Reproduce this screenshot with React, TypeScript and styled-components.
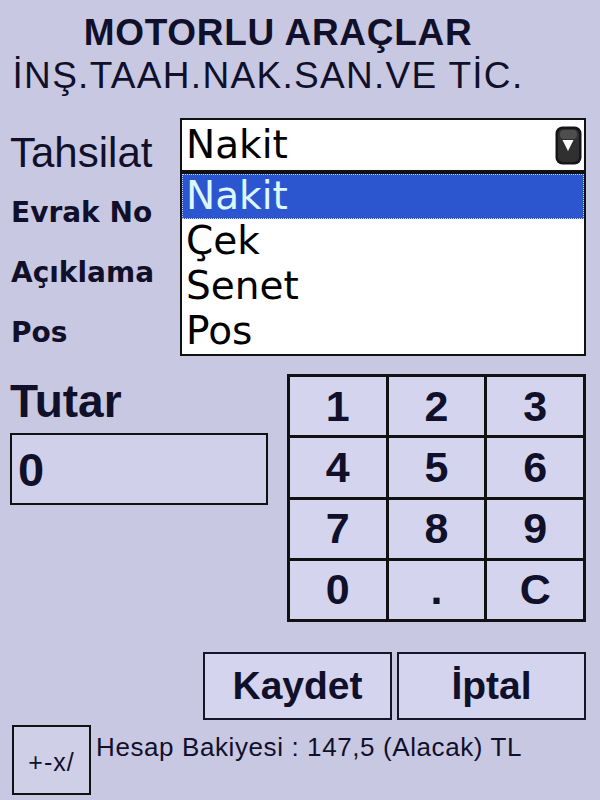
import React from "react";
import styled, { createGlobalStyle } from "styled-components";

const Global = createGlobalStyle`
  html, body { margin: 0; padding: 0; background: #c8c8e3; }
  body { font-family: "Liberation Sans", Arial, sans-serif; color: #10102a; }
  #root { width: 600px; min-height: 800px; }
`;

const Screen = styled.div`
  width: 600px;
  height: 800px;
  box-sizing: border-box;
  padding: 11px 14px 0 10px;
  overflow: hidden;
  background: #c8c8e3;
`;

const Header = styled.header`
  width: 536px;
  text-align: center;
`;

const HeaderLine = styled.div<{ $bold?: boolean; $shift?: number }>`
  font-size: 37px;
  line-height: 43px;
  font-weight: ${(p) => (p.$bold ? 700 : 400)};
  letter-spacing: ${(p) => (p.$bold ? "0.7px" : "1.3px")};
  padding-right: ${(p) => p.$shift ?? 0}px;
  white-space: nowrap;
`;

const Form = styled.div`
  display: grid;
  grid-template-columns: 170px 406px;
  grid-template-rows: 65px repeat(3, 60px);
  margin-top: 21px;
`;

const MainLabel = styled.div`
  font-size: 42px;
  line-height: 42px;
  padding-top: 14px;
  align-self: start;
`;

const FieldLabel = styled.div`
  font-family: "DejaVu Sans", sans-serif;
  font-weight: 700;
  font-size: 28px;
  line-height: 28px;
  align-self: center;
  padding-left: 1px;
`;

const FieldInput = styled.div`
  align-self: center;
  height: 44px;
  box-sizing: border-box;
  border: 2px solid #111;
  background: #d4d4ee;
`;

const SelectWrap = styled.div`
  position: relative;
  align-self: start;
  height: 54px;
`;

const SelectBox = styled.div`
  height: 54px;
  box-sizing: border-box;
  border: 2px solid #111;
  background: #fff;
  display: flex;
  align-items: center;
  justify-content: space-between;
  padding: 0 2px 0 4px;
`;

const OptionText = styled.span`
  font-family: "DejaVu Sans", sans-serif;
  font-size: 39px;
  line-height: 50px;
  color: #000;
`;

const OptionList = styled.div`
  position: absolute;
  top: 100%;
  left: 0;
  right: 0;
  z-index: 2;
  box-sizing: border-box;
  border: 2px solid #111;
  background: #fff;
`;

const OptionRow = styled.div<{ $active?: boolean }>`
  height: 45px;
  box-sizing: border-box;
  padding-left: 3px;
  font-family: "DejaVu Sans", sans-serif;
  font-size: 39px;
  line-height: 42px;
  color: ${(p) => (p.$active ? "#dcf8ff" : "#000")};
  background: ${(p) => (p.$active ? "#2c56cf" : "#fff")};
  border: 1px dotted ${(p) => (p.$active ? "#c9d4f0" : "transparent")};
`;

const Work = styled.div`
  display: flex;
  justify-content: space-between;
  align-items: flex-start;
  margin-top: 11px;
`;

const TutarCol = styled.div`
  width: 258px;
`;

const TutarLabel = styled.div`
  font-weight: 700;
  font-size: 46px;
  line-height: 46px;
  margin-top: 4px;
`;

const AmountBox = styled.div`
  margin-top: 9px;
  height: 72px;
  box-sizing: border-box;
  border: 2px solid #111;
  background: #d0d0ea;
  display: flex;
  align-items: center;
  padding-left: 6px;
  font-weight: 700;
  font-size: 47px;
`;

const Keypad = styled.div`
  width: 299px;
  height: 248px;
  box-sizing: border-box;
  padding: 3px;
  gap: 3px;
  background: #111;
  display: grid;
  grid-template-columns: repeat(3, 1fr);
  grid-template-rows: repeat(4, 1fr);
`;

const Key = styled.button`
  border: 0;
  padding: 0;
  margin: 0;
  background: #d4d4ee;
  color: #10102a;
  font-family: "Liberation Sans", Arial, sans-serif;
  font-weight: 700;
  font-size: 43px;
  display: flex;
  align-items: center;
  justify-content: center;
`;

const Actions = styled.div`
  display: flex;
  justify-content: flex-end;
  gap: 5px;
  margin-top: 30px;
`;

const ActionButton = styled.button`
  width: 189px;
  height: 68px;
  box-sizing: border-box;
  border: 2px solid #15152a;
  background: #d4d4ee;
  color: #10102a;
  font-family: "Liberation Sans", Arial, sans-serif;
  font-weight: 700;
  font-size: 39px;
  padding: 0;
`;

const Footer = styled.div`
  display: flex;
  align-items: flex-start;
  gap: 5px;
  margin-top: 5px;
`;

const CalcKey = styled.button`
  margin-left: 2px;
  width: 79px;
  height: 70px;
  box-sizing: border-box;
  border: 2px solid #111;
  background: #cfcfe8;
  color: #10102a;
  font-family: "Liberation Sans", Arial, sans-serif;
  font-size: 25px;
  letter-spacing: 1px;
  padding: 4px 0 0;
`;

const Balance = styled.div`
  font-size: 26px;
  line-height: 30px;
  letter-spacing: 0.6px;
  margin-top: 7px;
  white-space: nowrap;
`;

const ArrowIcon = () => (
  <svg width="27" height="39" viewBox="0 0 27 39">
    <rect x="0.5" y="0.5" width="26" height="38" rx="7" fill="#161616" />
    <rect x="3" y="3" width="21" height="33" rx="5" fill="#303030" />
    <rect x="5" y="4" width="17" height="9" rx="4" fill="#4e4e4e" />
    <polygon points="7.5,14 18.5,14 13,25" fill="#fff" />
  </svg>
);

const keys = ["1", "2", "3", "4", "5", "6", "7", "8", "9", "0", ".", "C"];
const options = ["Nakit", "Çek", "Senet", "Pos"];

export default function App() {
  return (
    <>
      <Global />
      <Screen>
        <Header>
          <HeaderLine $bold>MOTORLU ARAÇLAR</HeaderLine>
          <HeaderLine $shift={20}>İNŞ.TAAH.NAK.SAN.VE TİC.</HeaderLine>
        </Header>

        <Form>
          <MainLabel>Tahsilat</MainLabel>
          <SelectWrap>
            <SelectBox>
              <OptionText>Nakit</OptionText>
              <ArrowIcon />
            </SelectBox>
            <OptionList>
              {options.map((o, i) => (
                <OptionRow key={o} $active={i === 0}>
                  {o}
                </OptionRow>
              ))}
            </OptionList>
          </SelectWrap>
          <FieldLabel>Evrak No</FieldLabel>
          <FieldInput />
          <FieldLabel>Açıklama</FieldLabel>
          <FieldInput />
          <FieldLabel>Pos</FieldLabel>
          <FieldInput />
        </Form>

        <Work>
          <TutarCol>
            <TutarLabel>Tutar</TutarLabel>
            <AmountBox>0</AmountBox>
          </TutarCol>
          <Keypad>
            {keys.map((k) => (
              <Key key={k}>{k}</Key>
            ))}
          </Keypad>
        </Work>

        <Actions>
          <ActionButton>Kaydet</ActionButton>
          <ActionButton>İptal</ActionButton>
        </Actions>

        <Footer>
          <CalcKey>+-x/</CalcKey>
          <Balance>Hesap Bakiyesi : 147,5 (Alacak) TL</Balance>
        </Footer>
      </Screen>
    </>
  );
}
